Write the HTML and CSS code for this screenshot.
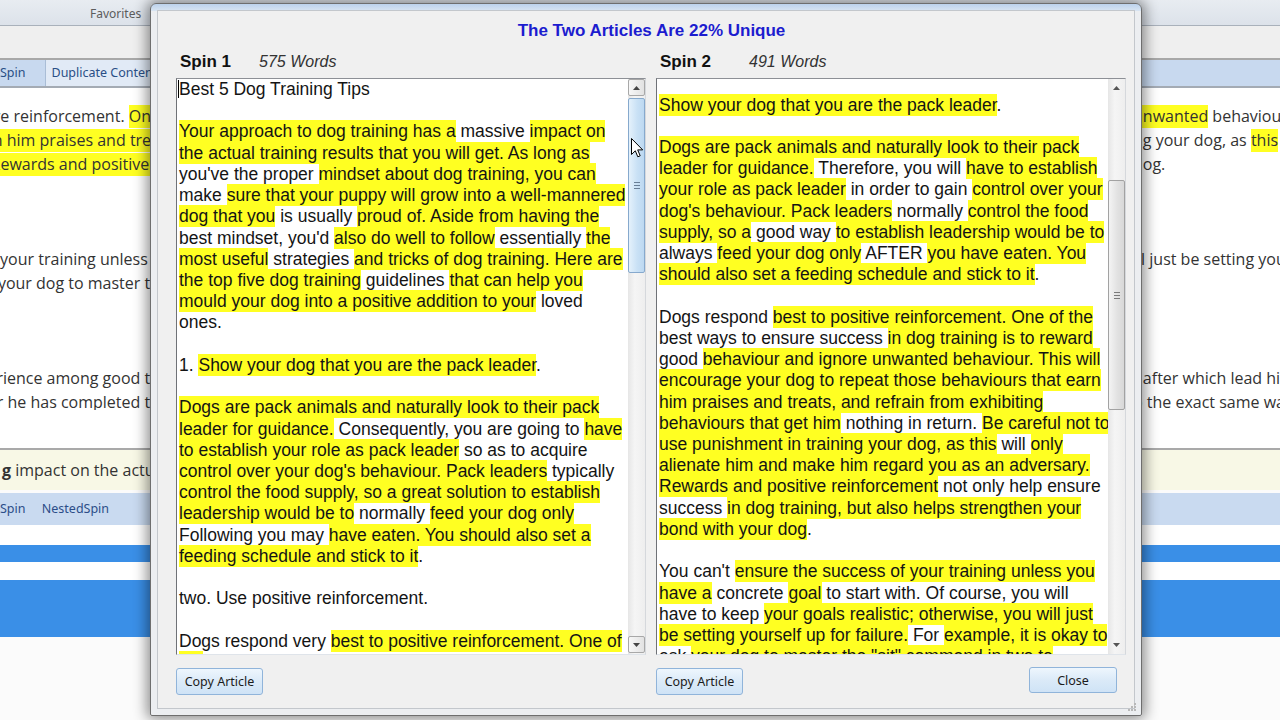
FILE: index.html
```html
<!DOCTYPE html>
<html lang="en">
<head>
    <meta charset="UTF-8">
    <title>Compare Spins</title>
    <link rel="stylesheet" href="styles.css">
</head>
<body>
    <div class="app">
        <div class="app-top"><span class="fav">Favorites</span></div>
        <div class="app-strip"></div>
        <div class="app-tabs">
            <span class="tab">Spin</span>
            <span class="tab tab-light">Duplicate Content</span>
        </div>
        <div class="app-editor">
            <div class="bg-text">
                <div class="bg-line"><div class="bg-l"><span>positive reinforcement. <mark>One</mark></span></div><div class="bg-r"><mark>unwanted</mark> behaviour.</div></div>
                <div class="bg-line"><div class="bg-l"><span><mark>earn him praises and trea</mark></span></div><div class="bg-r">ng your dog, as <mark>this</mark> will</div></div>
                <div class="bg-line"><div class="bg-l"><span><mark>Rewards and positive r</mark></span></div><div class="bg-r">dog.</div></div>
                <div class="bg-line"></div>
                <div class="bg-line"></div>
                <div class="bg-line"></div>
                <div class="bg-line"><div class="bg-l"><span>of your training unless y</span></div><div class="bg-r">ill just be setting yourself</div></div>
                <div class="bg-line"><div class="bg-l"><span>for your dog to master th</span></div><div class="bg-r"></div></div>
                <div class="bg-line"></div>
                <div class="bg-line"></div>
                <div class="bg-line"></div>
                <div class="bg-line"><div class="bg-l"><span>experience among good th</span></div><div class="bg-r">t after which lead him</div></div>
                <div class="bg-line"><div class="bg-l"><span>after he has completed th</span></div><div class="bg-r">o the exact same way</div></div>
            </div>
        </div>
        <div class="app-status"><b>g</b> impact on the actual training</div>
        <div class="app-tabs2">
            <span>Spin</span>
            <span class="nested">NestedSpin</span>
        </div>
        <div class="list-gap"></div>
        <div class="list-bar"></div>
        <div class="list-gap2"></div>
        <div class="list-bar big"></div>
    </div>

    <div class="dialog">
        <div class="client">
            <div class="dlg-title">The Two Articles Are 22% Unique</div>
            <div class="panes">
                <div class="pane">
                    <div class="pane-head"><span class="spin-name">Spin 1</span><span class="words words-1">575 Words</span></div>
                    <div class="textbox">
                        <div class="tb-text">
<p class="ln"><span class="caret"></span>Best 5 Dog Training Tips</p>
<p class="ln"></p>
<p class="ln"><mark>Your approach to dog training has a</mark> massive <mark>impact on</mark></p>
<p class="ln"><mark>the actual training results that you will get. As long as</mark></p>
<p class="ln">you've the proper <mark>mindset about dog training, you can</mark></p>
<p class="ln">make <mark>sure that your puppy will grow into a well-mannered</mark></p>
<p class="ln"><mark>dog that you</mark> is usually <mark>proud of. Aside from having the</mark></p>
<p class="ln">best mindset, you'd <mark>also do well to follow</mark> essentially <mark>the</mark></p>
<p class="ln"><mark>most useful</mark> strategies <mark>and tricks of dog training. Here are</mark></p>
<p class="ln"><mark>the top five dog training</mark> guidelines <mark>that can help you</mark></p>
<p class="ln"><mark>mould your dog into a positive addition to your</mark> loved</p>
<p class="ln">ones.</p>
<p class="ln"></p>
<p class="ln">1. <mark>Show your dog that you are the pack leader</mark>.</p>
<p class="ln"></p>
<p class="ln"><mark>Dogs are pack animals and naturally look to their pack</mark></p>
<p class="ln"><mark>leader for guidance.</mark> Consequently, you are going to <mark>have</mark></p>
<p class="ln"><mark>to establish your role as pack leader</mark> so as to acquire</p>
<p class="ln"><mark>control over your dog's behaviour. Pack leaders</mark> typically</p>
<p class="ln"><mark>control the food supply, so a great solution to establish</mark></p>
<p class="ln"><mark>leadership would be to</mark> normally <mark>feed your dog only</mark></p>
<p class="ln">Following you may <mark>have eaten. You should also set a</mark></p>
<p class="ln"><mark>feeding schedule and stick to it</mark>.</p>
<p class="ln"></p>
<p class="ln">two. Use positive reinforcement.</p>
<p class="ln"></p>
<p class="ln">Dogs respond very <mark>best to positive reinforcement. One of</mark></p>
<p class="ln"><mark>the</mark> best ways to ensure success in dog training is to</p>
                        </div>
                        <div class="scroll hot">
                            <div class="sb-btn"><svg width="7" height="4" viewBox="0 0 7 4"><polygon points="0,4 3.5,0 7,4" fill="#444"/></svg></div>
                            <div class="thumb thumb-1"><span class="grip"></span></div>
                            <div class="sb-btn sb-down"><svg width="7" height="4" viewBox="0 0 7 4"><polygon points="0,0 3.5,4 7,0" fill="#444"/></svg></div>
                        </div>
                    </div>
                </div>
                <div class="pane">
                    <div class="pane-head"><span class="spin-name">Spin 2</span><span class="words words-2">491 Words</span></div>
                    <div class="textbox">
                        <div class="tb-text tb-right">
<p class="ln"><mark>Show your dog that you are the pack leader</mark>.</p>
<p class="ln"></p>
<p class="ln"><mark>Dogs are pack animals and naturally look to their pack</mark></p>
<p class="ln"><mark>leader for guidance.</mark> Therefore, you will <mark>have to establish</mark></p>
<p class="ln"><mark>your role as pack leader</mark> in order to gain <mark>control over your</mark></p>
<p class="ln"><mark>dog's behaviour. Pack leaders</mark> normally <mark>control the food</mark></p>
<p class="ln"><mark>supply, so a</mark> good way <mark>to establish leadership would be to</mark></p>
<p class="ln">always <mark>feed your dog only</mark> AFTER <mark>you have eaten. You</mark></p>
<p class="ln"><mark>should also set a feeding schedule and stick to it</mark>.</p>
<p class="ln"></p>
<p class="ln">Dogs respond <mark>best to positive reinforcement. One of the</mark></p>
<p class="ln">best ways to ensure success <mark>in dog training is to reward</mark></p>
<p class="ln">good <mark>behaviour and ignore unwanted behaviour. This will</mark></p>
<p class="ln"><mark>encourage your dog to repeat those behaviours that earn</mark></p>
<p class="ln"><mark>him praises and treats, and refrain from exhibiting</mark></p>
<p class="ln"><mark>behaviours that get him</mark> nothing in return. <mark>Be careful not to</mark></p>
<p class="ln"><mark>use punishment in training your dog, as this</mark> will <mark>only</mark></p>
<p class="ln"><mark>alienate him and make him regard you as an adversary.</mark></p>
<p class="ln"><mark>Rewards and positive reinforcement</mark> not only help ensure</p>
<p class="ln">success <mark>in dog training, but also helps strengthen your</mark></p>
<p class="ln"><mark>bond with your dog</mark>.</p>
<p class="ln"></p>
<p class="ln">You can't <mark>ensure the success of your training unless you</mark></p>
<p class="ln"><mark>have a</mark> concrete <mark>goal</mark> to start with. Of course, you will</p>
<p class="ln">have to keep <mark>your goals realistic; otherwise, you will just</mark></p>
<p class="ln"><mark>be setting yourself up for failure.</mark> For <mark>example, it is okay to</mark></p>
<p class="ln">ask <mark>your dog to master the "sit" command in two to</mark></p>
                        </div>
                        <div class="scroll">
                            <div class="sb-btn plain"><svg width="7" height="4" viewBox="0 0 7 4"><polygon points="0,4 3.5,0 7,4" fill="#555"/></svg></div>
                            <div class="thumb thumb-2"><span class="grip"></span></div>
                            <div class="sb-btn plain sb-down"><svg width="7" height="4" viewBox="0 0 7 4"><polygon points="0,0 3.5,4 7,0" fill="#555"/></svg></div>
                        </div>
                    </div>
                </div>
            </div>
            <div class="buttons">
                <div class="btn-cell"><button type="button" class="btn">Copy Article</button></div>
                <div class="btn-cell btn-cell-right">
                    <button type="button" class="btn">Copy Article</button>
                    <button type="button" class="btn btn-close">Close</button>
                </div>
            </div>
        </div>
        <svg class="resize-grip" width="10" height="10" viewBox="0 0 10 10">
            <rect x="7" y="1" width="2" height="2" fill="#b8b8b8"/>
            <rect x="4" y="4" width="2" height="2" fill="#b8b8b8"/>
            <rect x="7" y="4" width="2" height="2" fill="#b8b8b8"/>
            <rect x="1" y="7" width="2" height="2" fill="#b8b8b8"/>
            <rect x="4" y="7" width="2" height="2" fill="#b8b8b8"/>
            <rect x="7" y="7" width="2" height="2" fill="#b8b8b8"/>
        </svg>
    </div>

    <svg class="cursor" width="13" height="21" viewBox="0 0 13 21">
        <path d="M0.5,0.5 L0.5,16.5 L4.3,12.8 L6.8,18.8 L9.2,17.8 L6.7,11.9 L11.7,11.9 Z" fill="#fff" stroke="#000" stroke-width="1" stroke-linejoin="round"/>
    </svg>
</body>
</html>
```

FILE: styles.css
```css
body, html {
    margin: 0;
    padding: 0;
}

body {
    width: 1280px;
    height: 720px;
    overflow: hidden;
    position: relative;
    background-color: #fbfbfb;
    font-family: "Open Sans", "Noto Sans", sans-serif;
}

/* background application window */
.app-top {
    height: 25px;
    background: linear-gradient(#e8ecf1, #dce2ea);
    border-bottom: 1px solid #a9b1bb;
    padding-left: 90px;
    font-family: "Noto Sans", sans-serif;
    font-size: 12px;
    line-height: 27px;
    color: #5c5c5c;
}

.app-strip {
    height: 32px;
    background-color: #efefef;
    border-bottom: 2px solid #a8a8a8;
}

.app-tabs {
    height: 26px;
    background-color: #c8d9ef;
    border-bottom: 2px solid #a4abb4;
    display: flex;
    font-family: "Noto Sans", sans-serif;
    font-size: 12.5px;
    line-height: 26px;
    color: #2a4f86;
}

.tab {
    padding: 0 9px 0 0;
}

.tab-light {
    margin-left: 10px;
    padding-left: 6px;
    width: 150px;
    background-color: #e1eaf6;
    border-left: 1px solid #a9bdd6;
    white-space: nowrap;
}

.app-editor {
    height: 360px;
    background-color: #fff;
    padding-top: 17px;
    box-sizing: border-box;
}

.bg-text {
    height: 305px;
    overflow: hidden;
}

.bg-line {
    height: 23.8px;
    line-height: 23.8px;
    display: flex;
    font-size: 16px;
    color: #333;
    white-space: pre;
}

.bg-l {
    width: 160px;
    overflow: hidden;
    display: flex;
    justify-content: flex-end;
}

.bg-r {
    margin-left: auto;
    width: 147px;
    overflow: hidden;
}

.bg-line mark {
    background-color: #ffff22;
    color: #333;
    padding: 1px 0;
}

.app-status {
    height: 40px;
    background-color: #f8f8e6;
    border-top: 2px solid #a9a9a9;
    padding-left: 2px;
    font-size: 16px;
    line-height: 40px;
    color: #333;
    white-space: nowrap;
}

.app-tabs2 {
    margin-top: 3px;
    height: 32px;
    background-color: #c9daf0;
    font-family: "Noto Sans", sans-serif;
    font-size: 12.5px;
    line-height: 32px;
    color: #2c4d88;
}

.nested {
    margin-left: 13px;
}

.list-gap {
    height: 20px;
    background-color: #fff;
}

.list-bar {
    height: 17px;
    background-color: #3a8fe7;
}

.list-bar.big {
    height: 57px;
}

.list-gap2 {
    height: 18px;
    background-color: #fff;
}

/* dialog */
.dialog {
    position: absolute;
    left: 150px;
    top: 3px;
    width: 992px;
    height: 713px;
    box-sizing: border-box;
    border: 1px solid #6e6e6e;
    border-radius: 6px 6px 2px 2px;
    padding: 6px;
    background: linear-gradient(#bcd2ec, #d9e5f2 7px, #eceef1 7px);
    box-shadow: 0 0 14px 3px rgba(0,0,0,0.45);
}

.client {
    height: 100%;
    box-sizing: border-box;
    border: 1px solid #c3c7cc;
    background-color: #f0f0f0;
    font-family: "Liberation Sans", Arial, sans-serif;
}

.dlg-title {
    height: 39px;
    line-height: 39px;
    text-align: center;
    padding-left: 11px;
    font-size: 17px;
    font-weight: bold;
    color: #1c1ccf;
}

.panes {
    display: grid;
    grid-template-columns: 470px 470px;
    column-gap: 10px;
    padding-left: 18px;
}

.pane-head {
    height: 28px;
    padding: 3px 0 0 4px;
    box-sizing: border-box;
    line-height: 18px;
    color: #111;
}

.spin-name {
    font-size: 17px;
    font-weight: bold;
}

.words {
    font-size: 16px;
    font-style: italic;
    color: #333;
}

.words-1 {
    margin-left: 28px;
}

.words-2 {
    margin-left: 38px;
}

.textbox {
    height: 577px;
    box-sizing: border-box;
    border: 1px solid;
    border-color: #8d9096 #d5d8dc #dfe4ea #6f7277;
    background-color: #fff;
    display: flex;
}

.tb-text {
    flex: 1;
    overflow: hidden;
    padding-left: 2px;
    font-size: 17.5px;
    color: #141414;
}

.tb-right {
    padding-top: 15.5px;
}

.ln {
    margin: 0;
    height: 21.23px;
    line-height: 21.23px;
    white-space: pre;
}

.ln mark {
    background-color: #ffff22;
    color: #141414;
    padding: 1px 0;
}

.caret {
    display: inline-block;
    width: 1px;
    height: 18px;
    background-color: #000;
    vertical-align: -3px;
    margin-left: -1px;
}

/* scrollbars */
.scroll {
    width: 17px;
    display: flex;
    flex-direction: column;
    background: linear-gradient(90deg, #e6e6e6, #f5f5f5 40%, #eeeeee);
}

.sb-btn {
    height: 17px;
    box-sizing: border-box;
    border: 1px solid #a8a8a8;
    border-radius: 2px;
    background: linear-gradient(90deg, #f7f7f7, #e2e2e2);
    display: flex;
    align-items: center;
    justify-content: center;
}

.sb-btn.plain {
    border-color: transparent;
    background: none;
}

.sb-down {
    margin-top: auto;
    margin-bottom: 1px;
}

.thumb {
    box-sizing: border-box;
    border-radius: 2px;
    display: flex;
    align-items: center;
    justify-content: center;
}

.thumb-1 {
    margin-top: 2px;
    height: 175px;
    border: 1px solid #86a9cd;
    background: linear-gradient(90deg, #e4f1fb, #c9e1f5 55%, #bcd8f1);
}

.thumb-2 {
    margin-top: 84px;
    height: 230px;
    border: 1px solid #a2a2a2;
    background: linear-gradient(90deg, #f4f4f4, #e2e2e2 55%, #d8d8d8);
}

.grip {
    width: 6px;
    height: 5px;
    border-top: 1px solid #6a7f96;
    border-bottom: 1px solid #6a7f96;
    position: relative;
}

.grip::after {
    content: "";
    position: absolute;
    left: 0;
    right: 0;
    top: 2px;
    border-top: 1px solid #6a7f96;
}

.thumb-2 .grip,
.thumb-2 .grip::after {
    border-color: #7a7a7a;
}

/* buttons */
.buttons {
    display: grid;
    grid-template-columns: 471px 470px;
    column-gap: 9px;
    padding-left: 18px;
    margin-top: 13px;
}

.btn-cell-right {
    display: flex;
    justify-content: space-between;
    align-items: flex-start;
    padding-right: 9px;
}

.btn {
    width: 87px;
    height: 27px;
    border: 1px solid #90b4da;
    border-radius: 3px;
    background: linear-gradient(#eef6fd, #dbeaf8 50%, #cfe3f6);
    font-family: "Noto Sans", sans-serif;
    font-size: 12.5px;
    color: #1b1b1b;
    padding: 0;
    cursor: pointer;
}

.btn-close {
    width: 88px;
    height: 26px;
    margin-top: -1px;
}

.resize-grip {
    position: absolute;
    right: 4px;
    bottom: 3px;
}

.cursor {
    position: absolute;
    left: 631px;
    top: 138px;
}
```
